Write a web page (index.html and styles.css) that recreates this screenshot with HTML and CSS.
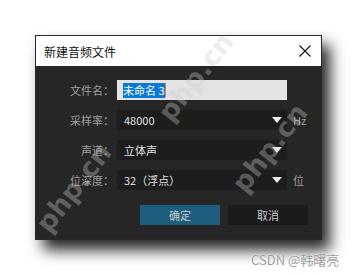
FILE: index.html
```html
<!DOCTYPE html>
<html lang="zh">
<head>
  <meta charset="UTF-8">
  <title>新建音频文件</title>
  <link rel="stylesheet" href="styles.css">
</head>
<body>
  <div class="dialog">
    <div class="titlebar">
      <span class="title">新建音频文件</span>
      <svg class="close" width="12" height="12" viewBox="0 0 12 12">
        <path d="M0.5 0.5 L11.5 11.5 M11.5 0.5 L0.5 11.5" stroke="#111" stroke-width="1.1" fill="none"/>
      </svg>
    </div>

    <div class="content">
      <div class="row">
        <span class="label">文件名：</span>
        <div class="field field-text"><span class="selected">未命名 3</span><span class="caret"></span></div>
        <span class="unit"></span>
      </div>
      <div class="row">
        <span class="label">采样率：</span>
        <div class="field field-select">48000<span class="arrow"></span></div>
        <span class="unit">Hz</span>
      </div>
      <div class="row">
        <span class="label">声道：</span>
        <div class="field field-select">立体声<span class="arrow"></span></div>
        <span class="unit"></span>
      </div>
      <div class="row">
        <span class="label">位深度：</span>
        <div class="field field-select">32（浮点）<span class="arrow"></span></div>
        <span class="unit">位</span>
      </div>

      <div class="buttons">
        <button class="btn btn-ok">确定</button>
        <button class="btn btn-cancel">取消</button>
      </div>
    </div>
  </div>

  <!-- watermarks -->
  <span class="wm wm1">php.cn</span>
  <span class="wm wm2">php.cn</span>
  <span class="wm wm3">php.cn</span>
  <span class="csdn">CSDN @韩曙亮</span>
</body>
</html>
```
FILE: styles.css
```css
html, body {
  margin: 0;
  padding: 0;
  background: #fff;
  font-family: "Noto Sans CJK SC", "Noto Sans", sans-serif;
}

body {
  position: relative;
  width: 358px;
  height: 275px;
  overflow: hidden;
}

.dialog {
  margin: 35px 0 0 35px;
  width: 287px;
  height: 205px;
  box-sizing: border-box;
  border: 1px solid #2a2a2a;
  background: #262626;
  box-shadow: 8px 10px 14px rgba(0, 0, 0, 0.85);
  display: flex;
  flex-direction: column;
}

.titlebar {
  height: 30px;
  background: #fff;
  display: flex;
  align-items: center;
  justify-content: space-between;
  padding: 0 10px 0 8px;
}

.title {
  font-size: 12px;
  color: #111;
}

.content {
  padding-top: 14px;
  display: flex;
  flex-direction: column;
  gap: 10px;
}

.row {
  display: flex;
  align-items: center;
  height: 20px;
}

.label {
  width: 78px;
  text-align: right;
  font-size: 11px;
  color: #a0a0a0;
  margin-right: 3px;
}

.field {
  width: 170px;
  height: 20px;
  box-sizing: border-box;
  font-size: 11px;
  display: flex;
  align-items: center;
}

.field-text {
  background: #e3e3e3;
  padding-left: 6px;
}

.selected {
  background: #0a78d4;
  color: #fff;
  line-height: 15px;
}

.caret {
  width: 1px;
  height: 14px;
  background: #e07a2a;
}

.field-select {
  background: #1d1d1d;
  color: #e0e0e0;
  padding: 0 5px 0 7px;
}

.arrow {
  margin-left: auto;
  width: 0;
  height: 0;
  border-left: 5px solid transparent;
  border-right: 5px solid transparent;
  border-top: 6px solid #eee;
}

.unit {
  margin-left: 6px;
  font-size: 11px;
  color: #a0a0a0;
}

.buttons {
  margin-top: 5px;
  display: flex;
  gap: 8px;
  padding-left: 104px;
}

.btn {
  width: 80px;
  height: 20px;
  border: none;
  font-family: inherit;
  font-size: 11px;
  color: #c8c8c8;
  padding: 0;
}

.btn-ok {
  background: #1d5e7e;
}

.btn-cancel {
  background: #1b1b1b;
}

.wm {
  position: absolute;
  font-family: "DejaVu Sans", sans-serif;
  font-weight: bold;
  font-size: 27px;
  line-height: 30px;
  color: rgba(205, 205, 205, 0.35);
  transform: rotate(-52deg);
  transform-origin: left bottom;
  white-space: nowrap;
}

.wm1 { left: 176px; top: 97px; }
.wm2 { left: 54px; top: 208px; }
.wm3 { left: 250px; top: 168px; }

.csdn {
  position: absolute;
  left: 251px;
  top: 250px;
  font-size: 13px;
  color: #a0a0a0;
  text-shadow: 0 0 2px #fff;
}
```
